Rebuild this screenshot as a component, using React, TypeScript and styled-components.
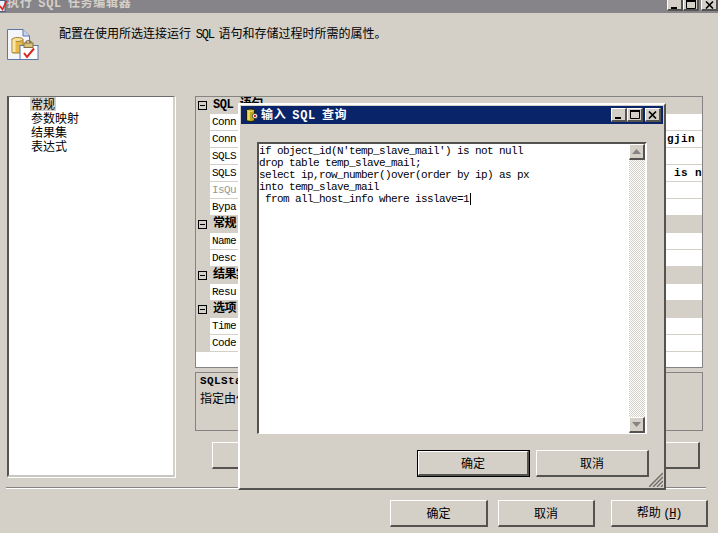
import React from "react";
import styled, { createGlobalStyle } from "styled-components";

const Global = createGlobalStyle`
  html, body { margin: 0; padding: 0; background: #d4d0c8; }
  * { box-sizing: border-box; }
`;
const CJK = `"Noto Sans CJK SC", "Liberation Sans", sans-serif`;
const MONO = `"Liberation Mono", "Noto Sans CJK SC", monospace`;
const raised = `
  border-style: solid;
  border-width: 1px 2px 2px 1px;
  border-color: #fff #55534f #55534f #fff;
`;

const Screen = styled.div`
  position: relative;
  width: 718px;
  height: 533px;
  overflow: hidden;
  background: #d4d0c8;
  font: 12px ${CJK};
  color: #000;
`;
const TitleBar = styled.div`
  height: 13px;
  background: #868488;
  display: flex;
  align-items: flex-end;
  overflow: hidden;
`;
const TitleText = styled.span`
  flex: 1;
  margin-bottom: 2px;
  font: bold 12px/14px ${MONO};
  letter-spacing: 0.7px;
  word-spacing: -2px;
  color: #d4d0c8;
  white-space: nowrap;
`;
const WinButtons = styled.div`
  display: flex;
  align-items: flex-end;
  height: 13px;
  padding-bottom: 2px;
`;
const WinBtn = styled.div<{ $w: number; $ml?: number }>`
  width: ${(p) => p.$w}px;
  height: 17px;
  flex: none;
  margin-left: ${(p) => p.$ml ?? 0}px;
  background: #d4d0c8;
  ${raised}
  display: flex;
  align-items: flex-end;
  justify-content: center;
`;
const Header = styled.div`
  height: 83px;
  display: flex;
  padding: 16px 0 0 7px;
`;
const HeaderText = styled.div`
  margin: -4px 0 0 20px;
  font: 12px/16px ${CJK};
  word-spacing: 2px;
  white-space: nowrap;
`;
const Latin = styled.span`
  font-family: ${MONO};
  font-size: 12px;
  letter-spacing: -1.2px;
`;
const Main = styled.div`
  display: flex;
  padding-left: 7px;
  height: 381px;
`;
const NavList = styled.div`
  width: 168px;
  height: 381px;
  padding: 0 0 0 21px;
  background: #fff;
  border-style: solid;
  border-width: 1px 2px 2px 2px;
  border-color: #6e6c68 #d4d0c8 #c8c6c2 #55534f;
  box-shadow: 1px 1px 0 #fff;
`;
const NavItem = styled.div<{ $sel?: boolean }>`
  height: 14px;
  width: max-content;
  font: 12px/14px ${CJK};
  padding: 0 1px;
  background: ${(p) => (p.$sel ? "#d4d0c8" : "transparent")};
`;
const Right = styled.div`
  margin-left: 20px;
  width: 508px;
  display: flex;
  flex-direction: column;
`;
const Grid = styled.div`
  height: 272px;
  border: 1px solid #868482;
  background: #fff;
  display: flex;
  flex-direction: column;
`;
const Section = styled.div`
  height: 17px;
  flex: none;
  background: #d4d0c8;
  display: flex;
  align-items: center;
  padding-left: 2px;
`;
const Toggle = styled.div`
  width: 9px;
  height: 9px;
  flex: none;
  border: 1px solid #000;
  display: flex;
  align-items: center;
  justify-content: center;
  &::before { content: ""; width: 5px; height: 1px; background: #000; }
`;
const SectionLabel = styled.span`
  margin-left: 6px;
  padding-bottom: 1px;
  font: bold 12px/14px ${MONO};
  letter-spacing: -0.5px;
  white-space: nowrap;
`;
const Row = styled.div`
  height: 17px;
  flex: none;
  display: flex;
  background: #d4d0c8;
`;
const RowGutter = styled.div`
  width: 14px;
  flex: none;
`;
const RowName = styled.div<{ $dim?: boolean }>`
  width: 120px;
  background: #fff;
  border-bottom: 1px solid #d4d0c8;
  border-right: 1px solid #d4d0c8;
  padding-left: 2px;
  font: 11px/16px ${MONO};
  letter-spacing: -0.6px;
  color: ${(p) => (p.$dim ? "#9a9894" : "#000")};
  overflow: hidden;
`;
const RowValue = styled.div`
  flex: 1;
  background: #fff;
  border-bottom: 1px solid #d4d0c8;
  font: bold 11px/16px ${MONO};
  letter-spacing: 0.4px;
  text-align: right;
  white-space: pre;
  overflow: hidden;
`;
const Describe = styled.div`
  margin-top: 4px;
  height: 59px;
  border: 1px solid #868482;
  padding: 1px 0 0 4px;
  overflow: hidden;
`;
const DescTitle = styled.div`
  font: bold 11px/14px ${MONO};
  letter-spacing: 0.4px;
`;
const DescBody = styled.div`
  margin-top: 2px;
  font: 12px/15px ${CJK};
`;
const BehindBtnRow = styled.div`
  margin: 11px 3px 0 17px;
`;
const Btn = styled.button<{ $w?: number; $def?: boolean; $ml?: number }>`
  display: block;
  width: ${(p) => (p.$w ? `${p.$w}px` : "100%")};
  height: 27px;
  margin-left: ${(p) => p.$ml ?? 0}px;
  padding: 0;
  background: #d4d0c8;
  ${raised}
  font: 12px/14px ${CJK};
  color: #000;
  ${(p) => (p.$def ? "outline: 1px solid #000; outline-offset: -1px; border-width: 2px 3px 3px 2px;" : "")}
`;
const Rule = styled.div`
  margin: 10px 12px 0 6px;
  height: 2px;
  border-top: 1px solid #868482;
  border-bottom: 1px solid #fff;
`;
const Footer = styled.div`
  display: flex;
  margin: 11px 0 0 390px;
`;
const Dialog = styled.div`
  position: absolute;
  left: 238px;
  top: 103px;
  width: 428px;
  height: 387px;
  background: #d4d0c8;
  border-style: solid;
  border-width: 2px;
  border-color: #fff #55534f #55534f #fff;
  padding: 1px;
  display: flex;
  flex-direction: column;
`;
const DlgTitle = styled.div`
  height: 18px;
  flex: none;
  background: #0a246a;
  display: flex;
  align-items: center;
  padding: 0 2px 0 5px;
`;
const DlgIconSvg = styled.svg`
  flex: none;
`;
const DlgTitleText = styled.span`
  margin-left: 3px;
  padding-top: 1px;
  flex: 1;
  font: bold 12px/14px ${MONO};
  letter-spacing: 0.7px;
  word-spacing: -2px;
  color: #fff;
  white-space: nowrap;
`;
const DlgBtns = styled.div`
  display: flex;
`;
const DlgBtn = styled.div<{ $ml?: number }>`
  width: 16px;
  height: 14px;
  margin-left: ${(p) => p.$ml ?? 0}px;
  background: #d4d0c8;
  ${raised}
  display: flex;
  align-items: center;
  justify-content: center;
`;
const Editor = styled.div`
  margin: 18px 0 0 16px;
  width: 390px;
  height: 292px;
  display: flex;
  background: #fff;
  border-style: solid;
  border-width: 2px 2px 1px 2px;
  border-color: #55534f #fff #fff #55534f;
`;
const Code = styled.pre`
  flex: 1;
  margin: 0;
  padding: 1px 0 0 0;
  font: 11px/12px ${MONO};
  letter-spacing: -0.6px;
  color: #000;
`;
const Caret = styled.span`
  display: inline-block;
  width: 1px;
  height: 12px;
  background: #000;
  vertical-align: top;
  margin-left: 1px;
`;
const Scroll = styled.div`
  width: 16px;
  display: flex;
  flex-direction: column;
  background-color: #e9e7e3;
  background-image: repeating-conic-gradient(#d4d0c8 0 25%, #fff 0 50%);
  background-size: 2px 2px;
`;
const ScrollBtn = styled.div`
  width: 16px;
  height: 16px;
  flex: none;
  background: #d4d0c8;
  ${raised}
  display: flex;
  align-items: center;
  justify-content: center;
`;
const ScrollGap = styled.div`
  flex: 1;
`;
const DlgActions = styled.div`
  display: flex;
  margin: 16px 0 0 176px;
  gap: 6px;
`;
const Grip = styled.svg`
  position: absolute;
  right: 1px;
  bottom: 1px;
`;

const rows: [string, string?, boolean?][] = [
  ["Conn"],
  ["Conn", "gjin "],
  ["SQLS"],
  ["SQLS", " is n"],
  ["IsQu", undefined, true],
  ["Bypa"],
];

function PropRow({ name, value, dim }: { name: string; value?: string; dim?: boolean }) {
  return (
    <Row>
      <RowGutter />
      <RowName $dim={dim}>{name}</RowName>
      <RowValue>{value ?? ""}</RowValue>
    </Row>
  );
}

function SectionRow({ label }: { label: string }) {
  return (
    <Section>
      <Toggle />
      <SectionLabel>{label}</SectionLabel>
    </Section>
  );
}

const Glyph = {
  Min: () => (
    <svg width="9" height="9" viewBox="0 0 9 9">
      <rect x="1" y="7" width="6" height="2" fill="#000" />
    </svg>
  ),
  Max: () => (
    <svg width="10" height="9" viewBox="0 0 10 9">
      <path d="M0.5 1.5H9.5V8.5H0.5Z" fill="none" stroke="#000" />
      <rect x="0" y="0" width="10" height="2" fill="#000" />
    </svg>
  ),
  Close: () => (
    <svg width="9" height="8" viewBox="0 0 9 8">
      <path d="M1 0.5L8 7.5M8 0.5L1 7.5" stroke="#000" strokeWidth="1.6" />
    </svg>
  ),
};

function BigIcon() {
  return (
    <svg width="32" height="32" viewBox="0 0 32 32">
      <path d="M0.5 0.5H16L22.5 7V30.5H0.5Z" fill="#f4f6fc" stroke="#5b76a8" />
      <path d="M16 0.5V7H22.5" fill="#c8d4ea" stroke="#5b76a8" />
      <rect x="5" y="10" width="11" height="14" rx="1" fill="#e8b84a" stroke="#a07c30" />
      <ellipse cx="10.5" cy="10.5" rx="5.5" ry="2" fill="#f6e09a" stroke="#a07c30" />
      <rect x="5.5" y="11" width="3" height="12" fill="#f8e5a8" />
      <rect x="13" y="16.5" width="18" height="14" fill="#fdfdff" stroke="#5b76a8" />
      <path d="M19 16V13.5C19 11 24 11 24 13.5V16" fill="none" stroke="#8a7240" strokeWidth="1.4" />
      <rect x="17" y="14" width="9" height="4.5" fill="#d9c27a" stroke="#8a7240" />
      <path d="M17 24L20 28L27 19.5" fill="none" stroke="#d8261c" strokeWidth="2" />
    </svg>
  );
}
function SmallIcon() {
  return (
    <svg width="7" height="13" viewBox="0 0 7 13">
      <rect x="-6" y="0.5" width="11" height="11" fill="#eef2fa" stroke="#4a5f88" />
      <path d="M0 6L2.5 9.5L6.5 1" fill="none" stroke="#d8261c" strokeWidth="1.6" />
    </svg>
  );
}
function DlgIcon() {
  return (
    <DlgIconSvg width="12" height="14" viewBox="0 0 12 14">
      <path d="M0.5 2.5C0.5 0.5 8.5 0.5 8.5 2.5V12C8.5 14 0.5 14 0.5 12Z" fill="#b8a824" stroke="#1f1c06" />
      <rect x="1.5" y="3" width="2.4" height="9" fill="#e8dc5a" />
      <path d="M1.5 2.5C3 3.6 6 3.6 7.5 2.5" fill="none" stroke="#f6ec9a" />
      <circle cx="9" cy="8" r="2.6" fill="#fff" stroke="#222" strokeWidth="0.7" />
      <circle cx="9" cy="8" r="1.2" fill="#c8261c" />
    </DlgIconSvg>
  );
}
const ArrowUp = () => (
  <svg width="9" height="5" viewBox="0 0 9 5"><path d="M4.5 0L9 5H0Z" fill="#868482" /></svg>
);
const ArrowDown = () => (
  <svg width="9" height="5" viewBox="0 0 9 5"><path d="M0 0H9L4.5 5Z" fill="#868482" /></svg>
);

export default function App() {
  return (
    <Screen>
      <Global />
      <TitleBar>
        <SmallIcon />
        <TitleText>执行 SQL 任务编辑器</TitleText>
        <WinButtons>
          <WinBtn $w={16}><Glyph.Min /></WinBtn>
          <WinBtn $w={16}><Glyph.Max /></WinBtn>
          <WinBtn $w={17} $ml={2}><Glyph.Close /></WinBtn>
        </WinButtons>
      </TitleBar>
      <Header>
        <BigIcon />
        <HeaderText>配置在使用所选连接运行 <Latin>SQL</Latin> 语句和存储过程时所需的属性。</HeaderText>
      </Header>
      <Main>
        <NavList>
          <NavItem $sel>常规</NavItem>
          <NavItem>参数映射</NavItem>
          <NavItem>结果集</NavItem>
          <NavItem>表达式</NavItem>
        </NavList>
        <Right>
          <Grid>
            <SectionRow label="SQL 语句" />
            {rows.map(([n, v, d], i) => (
              <PropRow key={i} name={n} value={v} dim={d} />
            ))}
            <SectionRow label="常规" />
            <PropRow name="Name" />
            <PropRow name="Desc" />
            <SectionRow label="结果集" />
            <PropRow name="Resu" />
            <SectionRow label="选项" />
            <PropRow name="Time" />
            <PropRow name="Code" />
          </Grid>
          <Describe>
            <DescTitle>SQLStatement</DescTitle>
            <DescBody>指定由任务运行的 SQL 语句。</DescBody>
          </Describe>
          <BehindBtnRow>
            <Btn />
          </BehindBtnRow>
        </Right>
      </Main>
      <Rule />
      <Footer>
        <Btn $w={98}>确定</Btn>
        <Btn $w={97} $ml={10}>取消</Btn>
        <Btn $w={97} $ml={16}>帮助 <Latin>(<u>H</u>)</Latin></Btn>
      </Footer>
      <Dialog>
        <DlgTitle>
          <DlgIcon />
          <DlgTitleText>输入 SQL 查询</DlgTitleText>
          <DlgBtns>
            <DlgBtn><Glyph.Min /></DlgBtn>
            <DlgBtn><Glyph.Max /></DlgBtn>
            <DlgBtn $ml={2}><Glyph.Close /></DlgBtn>
          </DlgBtns>
        </DlgTitle>
        <Editor>
          <Code>{`if object_id(N'temp_slave_mail') is not null
drop table temp_slave_mail;
select ip,row_number()over(order by ip) as px
into temp_slave_mail
 from all_host_info where isslave=1`}<Caret /></Code>
          <Scroll>
            <ScrollBtn><ArrowUp /></ScrollBtn>
            <ScrollGap />
            <ScrollBtn><ArrowDown /></ScrollBtn>
          </Scroll>
        </Editor>
        <DlgActions>
          <Btn $w={113} $def>确定</Btn>
          <Btn $w={113}>取消</Btn>
        </DlgActions>
        <Grip width="14" height="15" viewBox="0 0 14 15">
          <path d="M0 15L14 1M4 15L14 5M8 15L14 9M12 15L14 13" stroke="#6e6c68" strokeWidth="1.4" />
        </Grip>
      </Dialog>
    </Screen>
  );
}
